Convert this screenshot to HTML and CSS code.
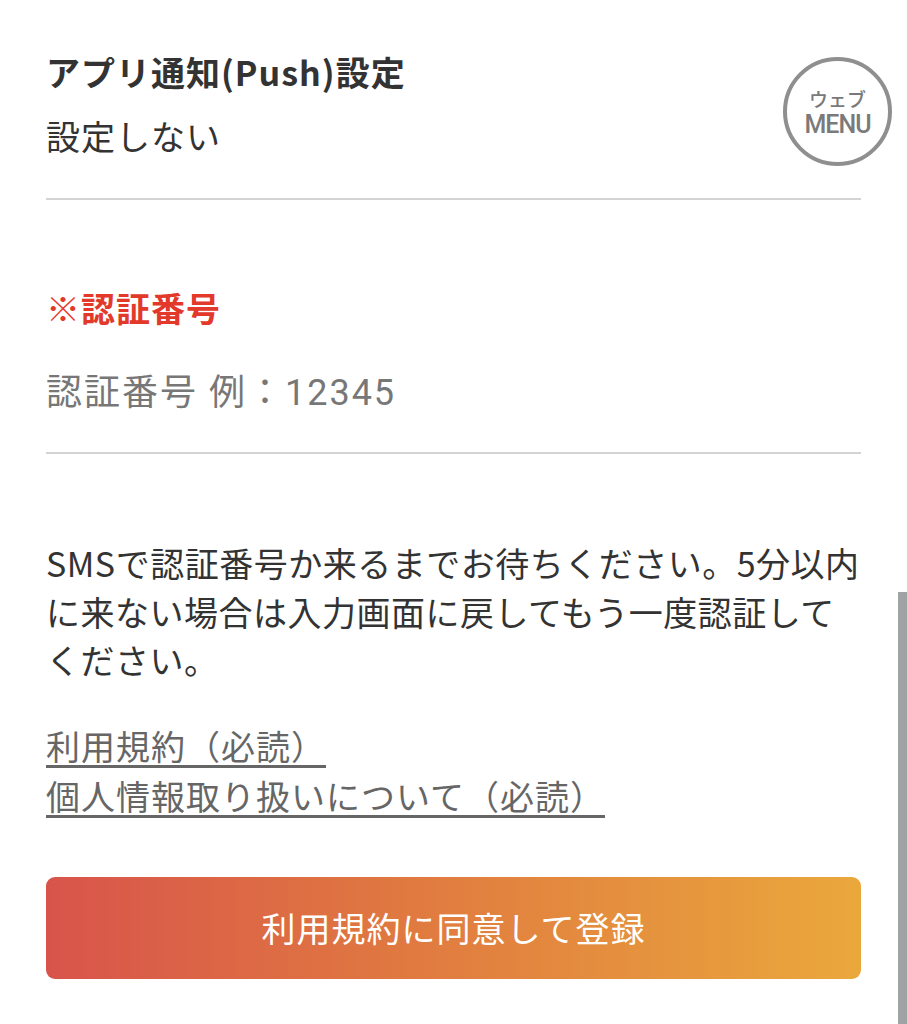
FILE: index.html
```html
<!DOCTYPE html>
<html lang="ja">
  <head>
    <meta charset="UTF-8" />
    <meta name="viewport" content="width=device-width, initial-scale=1.0" />
    <title>アプリ通知設定</title>
    <link rel="stylesheet" href="styles.css">
  </head>
  <body>
    <div class="page">
      <div class="row setting">
        <h2 class="label">アプリ通知(Push)設定</h2>
        <p class="value">設定しない</p>
      </div>

      <div class="row code">
        <h2 class="label req">※認証番号</h2>
        <input class="code-input" type="text" placeholder="認証番号 例：12345" />
      </div>

      <p class="note">
        SMSで認証番号か来るまでお待ちください。5分以内に来ない場合は入力画面に戻してもう一度認証してください。
      </p>

      <div class="links">
        <a href="#">利用規約（必読）</a>
        <a href="#">個人情報取り扱いについて（必読）</a>
      </div>

      <button class="submit">利用規約に同意して登録</button>
    </div>

    <a class="web-menu" href="#">
      <span class="wm-top">ウェブ</span>
      <span class="wm-bottom">MENU</span>
    </a>
    <div class="scroll-bar"></div>
  </body>
</html>
```

FILE: styles.css
```css
body {
  margin: 0;
  padding: 0;
  background: #fff;
  font-family: "Noto Sans CJK JP", "Noto Sans", sans-serif;
  color: #333;
}

.page {
  padding: 48px 46px 40px;
}

.row {
  border-bottom: 2px solid #d4d4d4;
}

.label {
  margin: 0;
  font-size: 34px;
  line-height: 48px;
  font-weight: 700;
  letter-spacing: 1px;
  color: #333;
}

.value {
  margin: 16px 0 0;
  padding-bottom: 38px;
  font-size: 34px;
  line-height: 48px;
  letter-spacing: 1px;
}

.code {
  margin-top: 84px;
}

.req {
  color: #e2392b;
}

.code-input {
  display: block;
  width: 100%;
  box-sizing: content-box;
  height: 48px;
  margin: 37px 0 0;
  padding: 0 0 35px;
  border: none;
  outline: none;
  background: transparent;
  font-family: "Roboto", "Noto Sans CJK JP", sans-serif;
  font-size: 36px;
  line-height: 48px;
  letter-spacing: 2px;
  color: #333;
}

.code-input::placeholder {
  color: #777;
}

.note {
  margin: 85px 0 0;
  font-size: 34px;
  line-height: 48.5px;
  letter-spacing: 0.5px;
  color: #333;
}

.links {
  display: flex;
  flex-direction: column;
  align-items: flex-start;
  margin-top: 36px;
}

.links a {
  font-size: 34px;
  line-height: 50px;
  letter-spacing: 1px;
  color: #666;
  text-decoration: underline;
  text-decoration-thickness: 3px;
  text-underline-offset: 5px;
}

.submit {
  display: block;
  width: 100%;
  height: 102px;
  margin-top: 56px;
  border: none;
  border-radius: 9px;
  background: linear-gradient(90deg, #d8544b 0%, #e07a40 45%, #eaa83c 100%);
  color: #fff;
  font-family: "Noto Sans CJK JP", sans-serif;
  font-size: 34px;
  letter-spacing: 1px;
  cursor: pointer;
}

.web-menu {
  position: absolute;
  top: 57px;
  left: 783px;
  width: 101px;
  height: 101px;
  border: 4px solid #8f8f8f;
  border-radius: 50%;
  background: #fff;
  display: flex;
  flex-direction: column;
  align-items: center;
  justify-content: center;
  text-decoration: none;
  color: #7a7a7a;
}

.wm-top {
  font-size: 19px;
  line-height: 25px;
  font-weight: 500;
}

.wm-bottom {
  font-family: "Roboto", sans-serif;
  font-size: 25px;
  line-height: 27px;
  font-weight: 500;
  letter-spacing: -1px;
}

.scroll-bar {
  position: fixed;
  top: 592px;
  right: 0;
  width: 9px;
  height: 432px;
  background: #9fa3a3;
}
```
